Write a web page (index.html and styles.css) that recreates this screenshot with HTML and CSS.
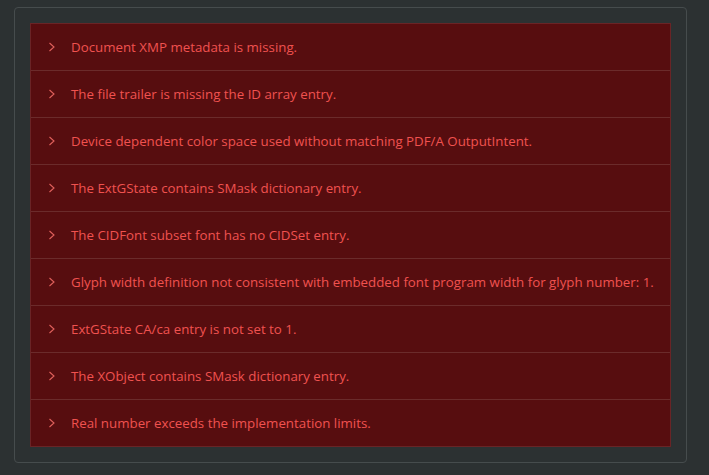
FILE: index.html
```html
<!DOCTYPE html>
<html>
<head>
<meta charset="utf-8">
<link rel="stylesheet" href="styles.css">
</head>
<body>
<div class="card">
  <ul class="list">
    <li class="row"><span class="chev"><svg width="8" height="10" viewBox="0 0 8 10"><path d="M1.5 1 L6 5 L1.5 9" fill="none" stroke="currentColor" stroke-width="1.1"/></svg></span><span class="msg">Document XMP metadata is missing.</span></li>
    <li class="row"><span class="chev"><svg width="8" height="10" viewBox="0 0 8 10"><path d="M1.5 1 L6 5 L1.5 9" fill="none" stroke="currentColor" stroke-width="1.1"/></svg></span><span class="msg">The file trailer is missing the ID array entry.</span></li>
    <li class="row"><span class="chev"><svg width="8" height="10" viewBox="0 0 8 10"><path d="M1.5 1 L6 5 L1.5 9" fill="none" stroke="currentColor" stroke-width="1.1"/></svg></span><span class="msg">Device dependent color space used without matching PDF/A OutputIntent.</span></li>
    <li class="row"><span class="chev"><svg width="8" height="10" viewBox="0 0 8 10"><path d="M1.5 1 L6 5 L1.5 9" fill="none" stroke="currentColor" stroke-width="1.1"/></svg></span><span class="msg">The ExtGState contains SMask dictionary entry.</span></li>
    <li class="row"><span class="chev"><svg width="8" height="10" viewBox="0 0 8 10"><path d="M1.5 1 L6 5 L1.5 9" fill="none" stroke="currentColor" stroke-width="1.1"/></svg></span><span class="msg">The CIDFont subset font has no CIDSet entry.</span></li>
    <li class="row"><span class="chev"><svg width="8" height="10" viewBox="0 0 8 10"><path d="M1.5 1 L6 5 L1.5 9" fill="none" stroke="currentColor" stroke-width="1.1"/></svg></span><span class="msg">Glyph width definition not consistent with embedded font program width for glyph number: 1.</span></li>
    <li class="row"><span class="chev"><svg width="8" height="10" viewBox="0 0 8 10"><path d="M1.5 1 L6 5 L1.5 9" fill="none" stroke="currentColor" stroke-width="1.1"/></svg></span><span class="msg">ExtGState CA/ca entry is not set to 1.</span></li>
    <li class="row"><span class="chev"><svg width="8" height="10" viewBox="0 0 8 10"><path d="M1.5 1 L6 5 L1.5 9" fill="none" stroke="currentColor" stroke-width="1.1"/></svg></span><span class="msg">The XObject contains SMask dictionary entry.</span></li>
    <li class="row"><span class="chev"><svg width="8" height="10" viewBox="0 0 8 10"><path d="M1.5 1 L6 5 L1.5 9" fill="none" stroke="currentColor" stroke-width="1.1"/></svg></span><span class="msg">Real number exceeds the implementation limits.</span></li>
  </ul>
</div>
</body>
</html>
```
FILE: styles.css
```css
html, body {
  margin: 0;
  padding: 0;
  background: #2c3132;
  height: 100%;
}
body {
  padding: 7px 0 0 14px;
  box-sizing: border-box;
  font-family: "Open Sans", "Noto Sans", sans-serif;
}
.card {
  width: 673px;
  box-sizing: border-box;
  border: 1px solid #464c4d;
  border-radius: 4px;
  padding: 15px;
}
.list {
  list-style: none;
  margin: 0;
  padding: 0;
  background: #570d0f;
  border: 1px solid #6a2426;
}
.row {
  height: 47px;
  box-sizing: border-box;
  display: flex;
  align-items: center;
  border-top: 1px solid #6b2b2b;
  color: #f0524f;
  font-size: 13.3px;
}
.row:first-child {
  border-top: none;
  height: 46px;
}
.chev {
  display: flex;
  width: 8px;
  margin-left: 17px;
  margin-right: 15px;
  color: #e0605c;
}
.msg {
  white-space: nowrap;
}
```
